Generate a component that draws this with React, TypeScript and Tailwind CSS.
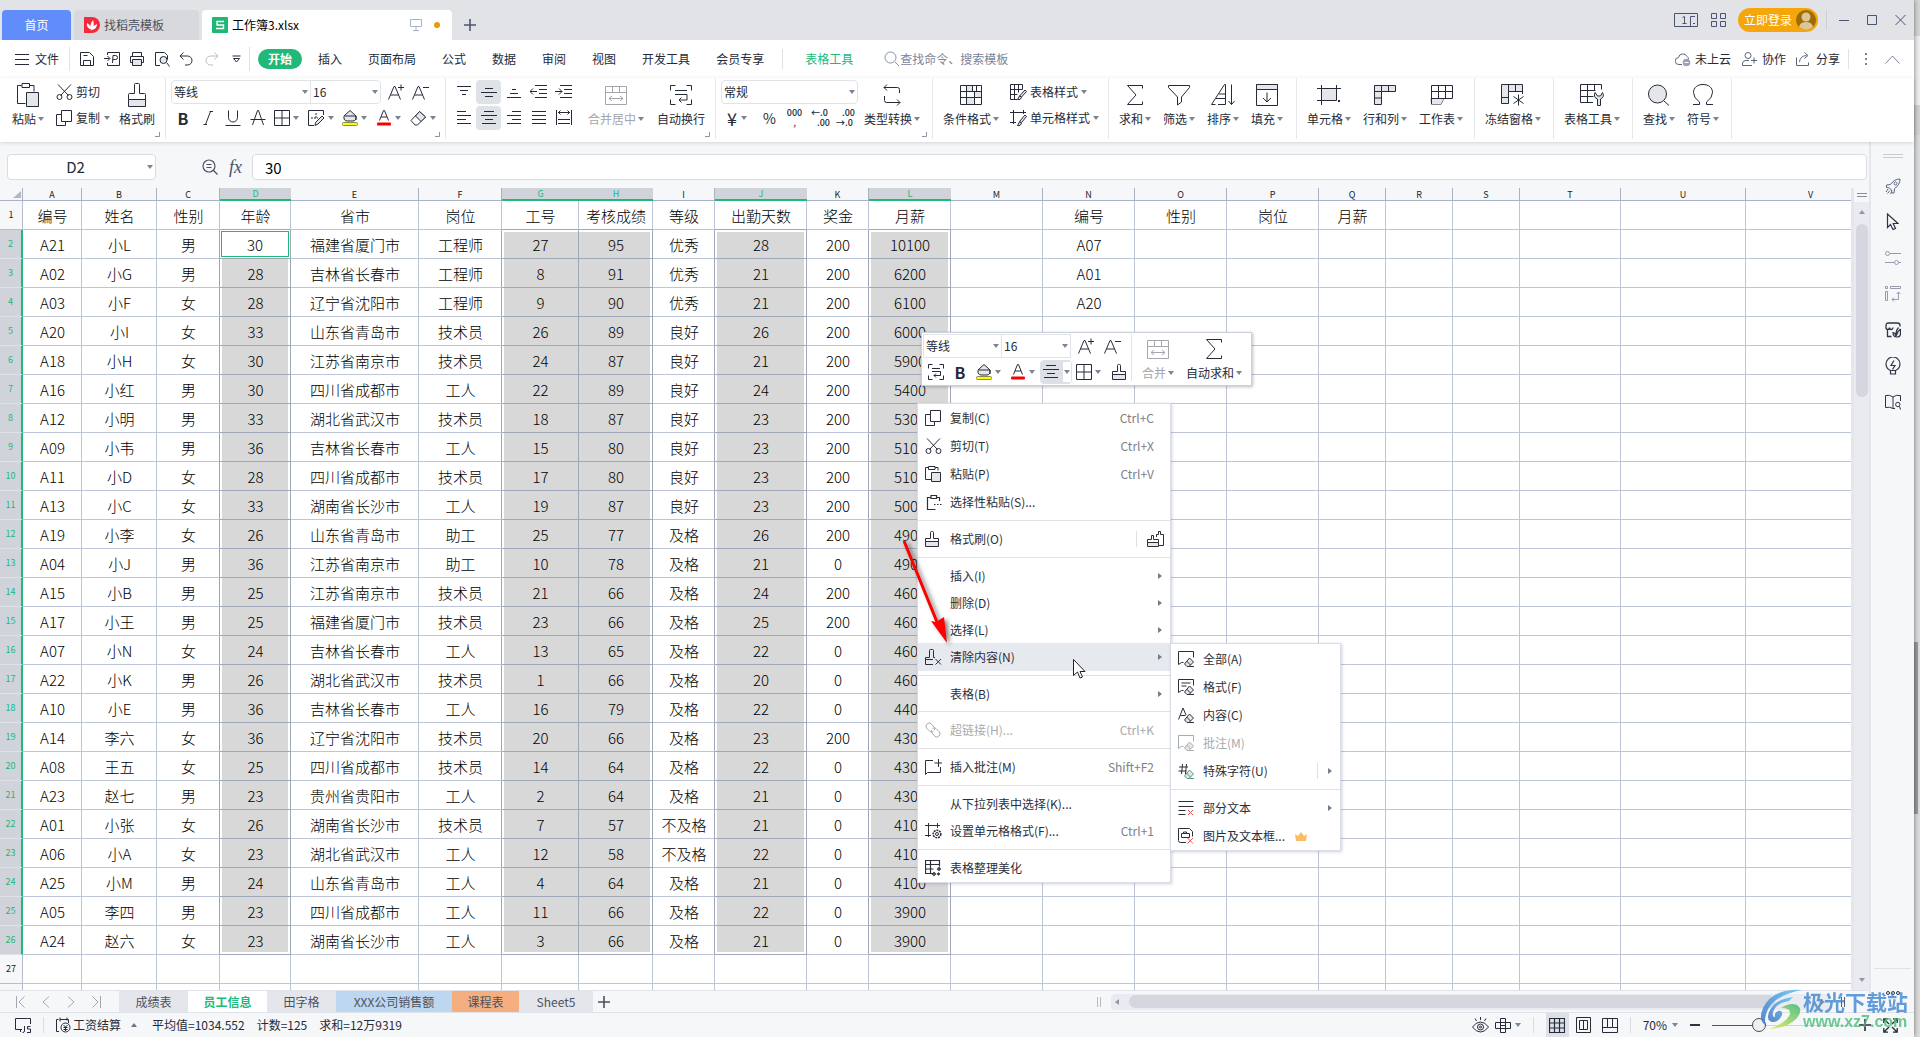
import React from 'react';
import type { ReactNode } from 'react';

const G = '#e4e6ea';

type IconDef = [number, number, ReactNode];

const eraser = (
  <path d="M11.5 7l4 4-4.5 4.5h-2l-2.5-2.5zM8.5 10l4 4M9 15.5h7" fill={G} />
);

const ICONS: Record<string, IconDef> = {
  menu: [14, 12, <path d="M0 1.5h14M0 6.5h14M0 11.5h14" />],
  save: [16, 16, <path d="M1.5 1.5h9l4 4v9h-13zM4.5 14.5v-5h7v5M4.5 4.5h4" />],
  pdf: [16, 16, <path d="M3.5 4V1.5h12v13h-12V12M0 7.500h5.500M3.500 5l2.500 2.500L3.500 10M8.500 12l.5-7.500h2.500q2 0 2 2t-2 2H9" />],
  print: [16, 16, <><path d="M3.500 5.500v-4h9v4M3.500 11.500h-2v-6h13v6h-2" /><path d="M3.500 8.500h9v6h-9z" fill={G} /></>],
  preview: [16, 16, <><path d="M6 14.500H1.500v-13h9l3 3v4M13 12l2.500 3.500" /><circle cx="9.500" cy="9" r="3.500" fill={G} /></>],
  undo: [14, 14, <path d="M4.500.5l-3.500 3.500 3.500 3.500M1 4h7.500a4.500 4.500 0 010 9H6" />],
  redo: [14, 14, <path d="M9.500.5l3.500 3.500-3.500 3.500M13 4H5.500a4.500 4.500 0 000 9H8" />],
  more: [9, 8, <path d="M.5 1h8M1.500 3.500h6L4.500 7z" />],
  search: [16, 16, <path d="M11 11l4 4M12 6.500a5.500 5.500 0 11-11 0 5.500 5.500 0 0111 0z" />],
  paste: [22, 24, <><path d="M8.500 20.500h-8v-18h4M13 2.500h4v6M5 .5h7.500v4H5z" /><path d="M9.500 9.500h12v14h-12z" fill={G} /></>],
  cut: [17, 16, <><path d="M2 .5l10.500 11M15 .5L4.500 11.500" /><circle cx="3.500" cy="13" r="2.500" /><circle cx="13.500" cy="13" r="2.500" /></>],
  copy: [16, 16, <path d="M5.500.5h10v11h-10zM5.500 4.500h-5v11h9v-4" />],
  brush: [18, 24, <><path d="M6.500 10.500V1.500q0-1 1-1h3q1 0 1 1v9h5q1 0 1 1v5H.5v-5q0-1 1-1z" /><path d="M.5 16.500h17v7H.5z" fill={G} /></>],
  brushSm: [14, 16, <><path d="M5.500 7.500v-6q0-1 1-1h1q1 0 1 1v6h5v3H.5v-3z" /><path d="M.5 10.500h13v5H.5z" fill={G} /></>],
  brush2: [17, 16, <><path d="M9.500 6V3.500h2v-3h2v3h3v11H12" /><path d="M4.500 8.500v-4h2v4h5v3H.5v-3z" fill="#fff" /><path d="M.5 11.500h11v4H.5z" fill={G} /></>],
  fontUp: [16, 16, <path d="M.5 15.500L6 2.500h1l5.500 13M2.500 11h8M10 3.500h6M13 .5v6" />],
  fontDown: [17, 16, <path d="M.5 15.500L6 2.500h1l5.500 13M2.500 11h8M11 3.500h6" />],
  italic: [10, 14, <path d="M4 13.500H.5M6.500.5H10M7.500.5l-5 13" />],
  underline: [16, 16, <path d="M3.500.5v7a4.500 4.500 0 009 0v-7M.5 15.500h15" />],
  strike: [16, 16, <path d="M2.500 15L7.500.5h1L13.500 15M.5 9.500h15" />],
  border: [16, 16, <path d="M.5.5h15v15H.5zM8 .5v15M.5 8h15" />],
  drawBorder: [17, 16, <><path d="M15.500 5V.5H.5v15H6" /><path d="M8 3v6M3 8h7" strokeDasharray="2 1" /><path d="M14 6l2 2-6 6-3 1.500.5-3z" fill={G} /></>],
  fill: [16, 16, <><path d="M8 .5l6 5.500v3q-1 2-3 2H5Q3 11 2 9V6z" fill={G} /><path d="M3 6h11v4" /><rect x=".5" y="12.500" width="15" height="3" rx="1" fill="#ffff00" stroke="#8a8a55" /></>],
  fontColor: [16, 16, <><path d="M3.500 10.500L7.500.5h1l4 10M5 7h6" /><rect x="1" y="12.500" width="14" height="3" rx="1" fill="#f00" stroke="none" /></>],
  eraser: [17, 16, <><path d="M9.500 1.500l6 5.500-8 8H5L1 10.500z" /><path d="M9.500 1.500l6 5.500-4.500 4.500L5.500 6z" fill={G} /></>],
  alTop: [14, 14, <path d="M0 1.500h14M3 5.500h8M5 9.500h4" />],
  alMid: [16, 14, <path d="M4 3.500h8M0 7.500h16M4 11.500h8" />],
  alBot: [14, 14, <path d="M5 4.500h4M3 8.500h8M0 12.500h14" />],
  indL: [17, 14, <path d="M5 .5h12M9 4.500h8M9 8.500h8M5 12.500h12M0 6.500h7M3 3.500L0 6.500l3 3" />],
  indR: [17, 14, <path d="M5 .5h12M9 4.500h8M9 8.500h8M5 12.500h12M0 6.500h7M4 3.500l3 3-3 3" />],
  left: [14, 14, <path d="M0 .5h9M0 4.500h14M0 8.500h9M0 12.500h14" />],
  center: [16, 14, <path d="M3 .5h10M0 4.500h16M4 8.500h8M1 12.500h14" />],
  right: [14, 14, <path d="M5 .5h9M0 4.500h14M5 8.500h9M0 12.500h14" />],
  justify: [14, 14, <path d="M0 .5h14M0 4.500h14M0 8.500h14M0 12.500h14" />],
  spread: [16, 16, <path d="M.5 0v15M15.500 0v15M2 2.500h12M4.500.5l-2 2 2 2M11.500.5l2 2-2 2M2 9.500h12M2 13.500h12" />],
  merge: [22, 19, <path d="M.5.5h21v18H.5zM.5 6.500h21M7.500.5v6M14.500.5v6M4 12.500h14M7 10l-3 2.500L7 15M15 10l3 2.500-3 2.500" />],
  wrap: [22, 20, <path d="M.5 5.500v-5h5M16.500.5h5v5M21.500 14.500v5h-5M5.500 19.500h-5v-5M5 5.500h12M5 9.500h12v5.500H9M11.500 12.500L9 15l2.500 2.500" />],
  wrapSm: [16, 16, <path d="M.5 4.500v-4h4M11.500.5h4v4M15.500 11.500v4h-4M4.500 15.500h-4v-4M4 4.500h8M4 7.500h8.500v4H6M8 9.500l-2 2 2 2" />],
  convert: [18, 22, <path d="M4 .5L1 3.500l3 3M1 3.500h13.500q2 0 2 2V9M14 15.500l3 3-3 3M17 18.500H3.500q-2 0-2-2V12" />],
  cond: [22, 20, <><path d="M.5.5h21v19H.5z" /><path d="M6.500.5h6v6h-6zM6.500 12.500h8v7h-8zM14.500 6.500h7v6h-7z" fill={G} /><path d="M.5 6.500h21M.5 12.500h21M6.500.5v19M12.500.5v6M16.500.5v6" /></>],
  tblStyle: [17, 16, <><path d="M7 15.500H.5V.5h12v5M.5 5.500h12M.5 10.500h7M4.500.5v15M8.500.5v8" /><path d="M15 6l1.500 1.500-5 5.500-2-1zM9.500 12l2 1.500-1.500 2H7.500z" fill={G} /></>],
  cellStyle: [17, 16, <><path d="M0 2.500h16M3.500 0v14M13.500 0v4M0 12.500h6" /><path d="M15 5l1.500 1.500-5 6-2-1zM9.500 12l2 1.500-1.500 2H7.500z" fill={G} /></>],
  sum: [18, 22, <path d="M16.500 4.500v-3H1.500L10 11 1.500 20.500h15v-3" />],
  filter: [22, 22, <path d="M.5 1.500h21v2L13.500 13v5l-4 3v-8L.5 3.500z" />],
  sort: [24, 22, <path d="M14.500 20.500V.5h-1L.5 20.500h4M5 14.500h9.500M8 10h6M20.500.5v20M17.500 17l3 3.500 3-3.500M7 20.500h7.500" />],
  fillDown: [22, 22, <><path d="M.5.5h21v21H.5z" /><path d="M.5.5h21v5H.5z" fill={G} /><path d="M11 8.500v9M7 14l4 4 4-4" /></>],
  cell: [24, 20, <><path d="M4.500 3.500h15v12h-15z" fill={G} /><path d="M0 3.500h24M4.500 0v20M19.500 0v14M0 15.500h18" /><rect x="21" y="15" width="2" height="2" fill="currentColor" stroke="none" /></>],
  rowcol: [22, 20, <><path d="M.5.5h21v6H7.500v13h-7z" fill={G} /><path d="M7.500.5v6M14.500.5v6M.5 6.500h7M.5 13h7" /></>],
  sheet: [23, 20, <><path d="M1 13.500h13l-3 6H1.500z" fill={G} stroke="#888" /><path d="M1.500.5h21v13h-21zM1.500 6.500h21M8.500.5v13M15.500.5v13M1.500 13v6" /></>],
  freeze: [24, 22, <><path d="M.5.5h21v7H7.500v12h-7z" fill={G} /><path d="M7.500.5v7M14.500.5v7M.5 13.500h7M21.500 7v3M17.500 10.500v11M12.500 12.500l10 7M22.500 12.500l-10 7" /></>],
  tools: [24, 22, <><path d="M13 18.500H.5V.5h21v5M.5 6.500h15M.5 12.500h13M7.500.5v18M14.500.5v6" /><path d="M15 8.500q-2 5 2.500 6.500v6.500h3V15q4.500-2 2-6.500l-2 3.500h-3z" fill={G} /></>],
  find: [22, 22, <><circle cx="9.500" cy="10" r="9" fill={G} /><path d="M16 17l5 4.500" /></>],
  symbol: [22, 22, <path d="M1 20.500h6.500v-2.500Q1.500 14 1.500 8.500C1.500 3.500 5.500.5 11 .5s9.500 3 9.500 8q0 5.500-6 9.500v2.500H21" />],
  tabs1: [24, 14, <path d="M.5.5h23v13H.5zM8.500 4.500l2-1v7M8.500 10.500h4M21 3.500h-4.500v10M19 10.500h2" />],
  apps: [15, 14, <path d="M.5.5h5v5h-5zM9.500.5h5v5h-5zM.5 8.500h5v5h-5zM9.500 8.500h5v5h-5z" />],
  min: [10, 10, <path d="M0 5.500h10" />],
  max: [10, 10, <path d="M.5.5h9v9h-9z" />],
  close: [11, 10, <path d="M.5 0l10 10M10.500 0L.5 10" />],
  plus: [12, 12, <path d="M6 0v12M0 6h12" strokeWidth="1.600" />],
  monitor: [12, 12, <path d="M.5.5h11v7H.5zM6 7.500v4M3 11.500h6" />],
  cloud: [16, 15, <><path d="M7 12.500H4a3.500 3.500 0 01-.5-7A4.500 4.500 0 0112 4.500q1.500 1 1.500 2.500" /><circle cx="11.500" cy="10.500" r="3.800" fill="#9aa2b5" stroke="none" /><path d="M9.500 10.500h4" stroke="#fff" /></>],
  collab: [15, 14, <path d="M9 3.500a3 3 0 11-6 0 3 3 0 016 0zM10 13.500H.5V11Q1 8.500 4 8.500h3M12 5.500v6M9 8.500h6" />],
  share: [15, 14, <path d="M.5 5.500v8h12v-3M3.500 10q.5-6 7-6.500M8.500.5l3.500 3L8.500 6.500" />],
  up: [15, 9, <path d="M.5 8.500L7.500 1l7 7.500" />],
  zoomFx: [17, 17, <path d="M11.500 11.500l4 4M13 7A6 6 0 111 7a6 6 0 0112 0zM4.500 5.500h5M4.500 8.500h5" strokeWidth="1.200" />],
  rocket: [16, 16, <path d="M15 1Q9 1 5.500 6.500L1.500 7v2.500l3 .5 2 2 .5 3H9l.5-4.500Q15 7 15 1zM3 11l-2 3M5 12.500l-2.500 3M6.500 14l-1 2M12 5.500a1.500 1.500 0 11-3 0 1.500 1.500 0 013 0z" />],
  pointer: [13, 18, <path d="M1.500 1v13.500l3-3 2.500 5 2.500-1-2.300-5H12z" strokeWidth="1.200" />],
  sliders: [16, 16, <path d="M5 3.500h11M0 12.500h9M14 12.500h2M4.500 3.500a2 2 0 11-4 0 2 2 0 014 0zM13.500 12.500a2 2 0 11-4 0 2 2 0 014 0z" />],
  transpose: [16, 16, <path d="M.5.5h2v2h-2zM5.500.5h10v2h-10zM.5 5.500h2v9h-2zM13.500 6v7.500H7M11.500 8l2-2 2 2M9 11.500l-2 2 2 2" />],
  store: [16, 16, <><path d="M2.500 8v6.500H6.500M1 5.500V3.500Q1 1 3.500 1h9Q15 1 15 3.500v1M1 5.500q0 2 1.700 2t1.800-2q0 2 1.700 2t1.800-2" strokeWidth="1.300" /><path d="M13.500 5.500q-3 3.500-2.500 7M15.500 7v4.500q0 3.500-3.500 3.500-4 0-4-4.500 2 0 3 3.500 1-4.500 4.500-7" fill={G} strokeWidth="1.200" /></>],
  idea: [16, 18, <path d="M5.500 13.500Q1 11.500 1 7a6.500 6.500 0 0114 0q0 4.500-4.500 6.500v3.500h-5zM9 3.500l-3 5h4l-2.500 4M6 13.500h4" strokeWidth="1.200" />],
  book: [16, 16, <path d="M8 14.500V3Q5 .5.5 1.500v12Q5 12.500 8 14.500zM8 3q3-2.500 7.500-1.500V7M8 14.500h2M15 10.500a2.200 2.200 0 11-4.400 0 2.200 2.200 0 014.400 0zM14.500 12.500l1 3" />],
  dots3: [16, 6, <path d="M4.500 3a1.500 1.500 0 11-3 0 1.500 1.500 0 013 0zM9.500 3a1.500 1.500 0 11-3 0 1.500 1.500 0 013 0zM14.500 3a1.500 1.500 0 11-3 0 1.500 1.500 0 013 0z" />],
  first: [9, 12, <path d="M.5 0v12M8.500.5L3 6l5.500 5.500" />],
  prev: [8, 12, <path d="M7 .5L1 6l6 5.500" />],
  next: [8, 12, <path d="M1 .5L7 6l-6 5.500" />],
  last: [9, 12, <path d="M8.500 0v12M.5.5L6 6 .5 11.500" />],
  jsMacro: [17, 16, <path d="M7 12.500H.5V1.500h12M12.500 1.500h3V7M5.500 12.500v2.500M9.500 9v5q0 1.500-2 1.500M15.500 9.500h-3v2.500h3v3.500h-3.500" />],
  payroll: [16, 16, <><path d="M4 14.500H1.500V2.500h2M5 .5v4M5 2.500h8.500V6M12 .5v3" /><circle cx="10.500" cy="10.500" r="4.500" /><path d="M8.500 8l2 2 2-2M8.500 10.500h4M8.500 12.500h4M10.500 10v4" /></>],
  eye: [17, 16, <path d="M.5 10q3.500-5 8-5t8 5q-3.500 5-8 5t-8-5zM11.500 10a3 3 0 11-6 0 3 3 0 016 0zM8.500 0v3M3 1.500L4.500 4M14 1.500L12.500 4M9.500 10a1 1 0 11-2 0 1 1 0 012 0z" />],
  cross: [16, 15, <path d="M5.500.5h5v14h-5zM.5 4.500h15v6H.5zM5.500 7.500h5" />],
  gridView: [16, 15, <path d="M.5.5h15v14H.5zM5.500.5v14M10.500.5v14M.5 5h15M.5 10h15" strokeWidth="1.200" />],
  pageView: [15, 16, <path d="M.5.5h14v15H.5zM3.500 3.500h8v9h-8zM7.500 3.500v9" />],
  breakView: [16, 15, <path d="M.5.5h15v14H.5zM5.500.5v9M10.500.5v9h-10M15.500 9.500h-5" />],
  full: [15, 15, <path d="M9 6l5-5M10 .8h4.200V5M6 6L1 1M.8 5V.8H5M9 9l5 5M14.200 10v4.200H10M6 9l-5 5M5 14.200H.8V10" strokeWidth="1.300" />],
  pasteSm: [16, 16, <><path d="M6 13.500H.5v-12h3M10 1.500h3v3M3.500.5H10v3H3.500z" /><path d="M6.500 6.500h9v9h-9z" fill={G} /></>],
  pasteSp: [17, 15, <path d="M14.500 6V2.500h-3M6 2.500H2.500v12h8M6 .5h5.500v3H6zM9 9.500h1.500M12 9.500h1.500M15 9.500h1.500" strokeWidth="1.200" />],
  clear: [17, 16, <path d="M8 15.500H.5v-7h4v-7q0-1 1-1h2q1 0 1 1v7H10M.5 10.500H8M10.500 10l5.500 5.500M16 10l-5.500 5.500" />],
  link: [16, 16, <path d="M8.500 9.500Q7 11 5 9.500L1.500 6Q0 4 2 2 4 0 6 1.500L9 5q1 1.500.5 3M7.500 6.500Q9 5 11 6.500l3.500 3.500q1.500 2-.5 4t-4 .5L7 11q-1-1.500-.5-3" />],
  comment: [17, 16, <path d="M8 1.500H.5v14l2-2h13V8M13.500 0v8M9.500 4h7.500" />],
  cellFmt: [17, 16, <><path d="M0 2.500h15M3.500 0v14M12.500 0v5M0 12.500h6" /><circle cx="12" cy="11" r="3.800" strokeWidth="1.600" strokeDasharray="2 .8" /><circle cx="12" cy="11" r="1.500" /></>],
  beautify: [16, 16, <path d="M8 13.500H.5V.5h14v6M.5 4.500h14M.5 9h8M5.500.5v13M14 7.500l1.500 1.500-1.500 1.500-1.500-1.500zM9 12.500l1.500 1.500L9 15.500 7.500 14zM13.500 13l1 1-1 1-1-1z" strokeWidth="1.200" />],
  clrAll: [17, 16, <><path d="M5.500 11.500H3.500l-3 2V.5h15v6" />{eraser}</>],
  clrFmt: [17, 16, <><path d="M5.500 11.500H3.500l-3 2V.5h15v6M3.500 4h9M3.500 7h5" />{eraser}</>],
  clrTxt: [17, 16, <><path d="M.5 12.500L5 1l3 7M2.500 8.500h5" />{eraser}</>],
  clrSym: [17, 16, <><path d="M4.500 1l-1 10M8.500 1l-1 10M1 4h9M.5 8h8" /><g stroke="#4f9d73">{eraser}</g></>],
  partTxt: [16, 16, <><path d="M.5 1.500h15M.5 6.500h15M.5 10.500h7M.5 14.500h7" /><path d="M10 10l5 5M15 10l-5 5" stroke="#e05252" /></>],
  pic: [16, 16, <><path d="M8 14.500H2.500q-2 0-2-2v-12h11l3 3v5M3.500 5.500h8v4h-8zM5.500 5.500V4h3v1.500" /><path d="M9.500 10l5.500 5.500M15 10l-5.500 5.500" stroke="#e05252" /></>],
};

function Icon({ name, className = '' }: { name: string; className?: string }) {
  const [w, h, body] = ICONS[name];
  return (
    <svg width={w} height={h} viewBox={`0 0 ${w} ${h}`} fill="none" stroke="currentColor" className={`shrink-0 ${className}`} aria-hidden="true">
      {body}
    </svg>
  );
}

function Caret({ className = 'text-[#7b8494]' }: { className?: string }) {
  return (
    <svg width="6" height="4" viewBox="0 0 6 4" className={`shrink-0 ${className}`} aria-hidden="true">
      <path d="M0 0h6L3 4z" fill="currentColor" />
    </svg>
  );
}

function Group({ children, corner }: { children: ReactNode; corner?: boolean }) {
  return (
    <div className="relative flex h-[61px] shrink-0 border-r border-[#e6e8ec] pt-0.5">
      {children}
      {corner && (
        <svg width="5" height="5" viewBox="0 0 5 5" fill="none" stroke="#8c94a3" className="absolute right-[5px] bottom-0.5" aria-hidden="true">
          <path d="M0 4.500h4.500V0" />
        </svg>
      )}
    </div>
  );
}

function Big({ icon, label, caret, muted, className = '' }: { icon: string; label: string; caret?: boolean; muted?: boolean; className?: string }) {
  return (
    <button className={`flex h-12 shrink-0 flex-col items-center whitespace-nowrap ${muted ? 'text-[#a3a6ac]' : ''} ${className}`}>
      <span className="flex h-[30px] items-center"><Icon name={icon} /></span>
      <span className="flex h-[18px] items-center gap-0.5">{label}{caret && <Caret />}</span>
    </button>
  );
}

function Tool({ icon, label, caret, active, className = '' }: { icon: string; label: string; caret?: boolean; active?: boolean; className?: string }) {
  return (
    <button
      aria-label={label}
      className={`flex h-6 shrink-0 items-center gap-[3px] ${caret ? 'w-[34px] pl-1' : 'w-[25px] justify-center'} ${active ? 'rounded-sm bg-[#dfe3e8]' : ''} ${className}`}
    >
      <Icon name={icon} />
      {caret && <Caret />}
    </button>
  );
}

function Dropdown({ label, value, className = '' }: { label: string; value: string; className?: string }) {
  return (
    <div className={`flex h-6 items-center border border-[#e0e3e8] bg-white pr-0.5 ${className}`}>
      <select aria-label={label} defaultValue={value} className="min-w-0 flex-1 appearance-none bg-transparent pl-0.5 outline-none">
        <option>{value}</option>
      </select>
      <Caret />
    </div>
  );
}

const MENU_TABS = ['插入', '页面布局', '公式', '数据', '审阅', '视图', '开发工具', '会员专享'];

const COLUMNS = [
  { id: 'A', w: 59 }, { id: 'B', w: 75 }, { id: 'C', w: 63 }, { id: 'D', w: 71, sel: 'both' },
  { id: 'E', w: 128 }, { id: 'F', w: 83 }, { id: 'G', w: 77, sel: 'left' }, { id: 'H', w: 74, sel: 'right' },
  { id: 'I', w: 62 }, { id: 'J', w: 92, sel: 'both' }, { id: 'K', w: 62 }, { id: 'L', w: 82, sel: 'both' },
  { id: 'M', w: 92 }, { id: 'N', w: 92 }, { id: 'O', w: 92 }, { id: 'P', w: 92 }, { id: 'Q', w: 67 },
  { id: 'R', w: 67 }, { id: 'S', w: 67 }, { id: 'T', w: 101 }, { id: 'U', w: 125 }, { id: 'V', w: 130 },
];

const ROWS = [
  '编号,姓名,性别,年龄,省市,岗位,工号,考核成绩,等级,出勤天数,奖金,月薪,,编号,性别,岗位,月薪',
  'A21,小L,男,30,福建省厦门市,工程师,27,95,优秀,28,200,10100,,A07',
  'A02,小G,男,28,吉林省长春市,工程师,8,91,优秀,21,200,6200,,A01',
  'A03,小F,女,28,辽宁省沈阳市,工程师,9,90,优秀,21,200,6100,,A20',
  'A20,小I,女,33,山东省青岛市,技术员,26,89,良好,26,200,6000',
  'A18,小H,女,30,江苏省南京市,技术员,24,87,良好,21,200,5900',
  'A16,小红,男,30,四川省成都市,工人,22,89,良好,24,200,5400',
  'A12,小明,男,33,湖北省武汉市,技术员,18,87,良好,23,200,5300',
  'A09,小韦,男,36,吉林省长春市,工人,15,80,良好,23,200,5100',
  'A11,小D,女,28,四川省成都市,技术员,17,80,良好,23,200,5100',
  'A13,小C,女,33,湖南省长沙市,工人,19,87,良好,23,200,5000',
  'A19,小李,女,26,山东省青岛市,助工,25,77,及格,26,200,4900',
  'A04,小J,男,36,江苏省南京市,助工,10,78,及格,21,0,4900',
  'A15,小B,男,25,江苏省南京市,技术员,21,66,及格,24,200,4600',
  'A17,小王,男,25,福建省厦门市,技术员,23,66,及格,25,200,4600',
  'A07,小N,女,24,吉林省长春市,工人,13,65,及格,22,0,4600',
  'A22,小K,男,26,湖北省武汉市,技术员,1,66,及格,20,0,4600',
  'A10,小E,男,36,吉林省长春市,工人,16,79,及格,22,0,4400',
  'A14,李六,女,36,辽宁省沈阳市,技术员,20,66,及格,23,200,4300',
  'A08,王五,女,25,四川省成都市,技术员,14,64,及格,22,0,4300',
  'A23,赵七,男,23,贵州省贵阳市,工人,2,64,及格,21,0,4300',
  'A01,小张,女,26,湖南省长沙市,技术员,7,57,不及格,21,0,4100',
  'A06,小A,女,23,湖北省武汉市,工人,12,58,不及格,22,0,4100',
  'A25,小M,男,24,山东省青岛市,工人,4,64,及格,21,0,4100',
  'A05,李四,男,23,四川省成都市,工人,11,66,及格,22,0,3900',
  'A24,赵六,女,23,湖南省长沙市,工人,3,66,及格,21,0,3900',
  '',
  '',
].map((line) => line.split(','));

const INSET: Record<string, string> = {
  both: 'shadow-[inset_2px_0_#fff,inset_-2px_0_#fff]',
  left: 'shadow-[inset_2px_0_#fff]',
  right: 'shadow-[inset_-2px_0_#fff]',
  bothTop: 'shadow-[inset_2px_0_#fff,inset_-2px_0_#fff,inset_0_2px_#fff]',
  leftTop: 'shadow-[inset_2px_0_#fff,inset_0_2px_#fff]',
  rightTop: 'shadow-[inset_-2px_0_#fff,inset_0_2px_#fff]',
  bothEnd: 'shadow-[inset_2px_0_#fff,inset_-2px_0_#fff,inset_0_-2px_#fff]',
  leftEnd: 'shadow-[inset_2px_0_#fff,inset_0_-2px_#fff]',
  rightEnd: 'shadow-[inset_-2px_0_#fff,inset_0_-2px_#fff]',
};

function Sheet() {
  return (
    <table className="w-0 min-w-full table-fixed border-separate border-spacing-0 text-center text-[15px] font-light text-black">
      <colgroup>
        <col className="w-[23px]" />
        {COLUMNS.map((c) => <col key={c.id} style={{ width: c.w }} />)}
      </colgroup>
      <thead>
        <tr className="text-[9px] leading-[11px]">
          <th className="h-[13px] border-r border-b border-[#a9b1c4] bg-[#f5f7f9] p-0">
            <svg width="8" height="7" viewBox="0 0 8 7" className="mr-px ml-auto" aria-hidden="true"><path d="M8 0v7H0z" fill="#b4b8be" /></svg>
          </th>
          {COLUMNS.map((c) => (
            <th
              key={c.id}
              scope="col"
              className={`h-[13px] p-0 font-normal ${c.sel ? 'border-b-2 border-b-[#20b97a] bg-[#d0d3da] text-[#20b97a]' : 'border-r border-b border-[#a9b1c4] bg-[#f5f7f9] text-[#222]'}`}
            >
              {c.id}
            </th>
          ))}
        </tr>
      </thead>
      <tbody>
        {ROWS.map((row, r) => {
          const picked = r > 0 && r < 26;
          return (
            <tr key={r}>
              <th
                scope="row"
                className={`h-[29px] border-b p-0 text-[9px] font-normal ${picked ? 'border-r-2 border-r-[#20b97a] border-b-[#dfe2e8] bg-[#d0d3da] text-[#20b97a]' : 'border-r border-[#b7bdcc] bg-[#f5f7f9] text-[#222]'}`}
              >
                {r < 27 ? r + 1 : ''}
              </th>
              {COLUMNS.map((c, i) => {
                const sel = picked && c.sel;
                const nextSel = picked && COLUMNS[i + 1]?.sel;
                const active = r === 1 && c.id === 'D';
                const edge = r === 1 ? 'Top' : r === 25 ? 'End' : '';
                return (
                  <td
                    key={c.id}
                    className={`h-[29px] border-r border-b leading-5 whitespace-nowrap ${active ? 'p-0' : 'p-0 pt-0.5 pl-px'} ${sel || nextSel ? 'border-r-[#a0a7b8]' : 'border-r-[#bfc5d8]'} ${(sel || (r === 0 && c.sel)) ? 'border-b-[#a0a7b8]' : 'border-b-[#bfc5d8]'} ${sel && !active ? `bg-[#d8d8d8] ${INSET[c.sel + edge]}` : 'bg-white'}`}
                  >
                    {active ? (
                      <div className="mx-px flex h-[26px] items-center justify-center border border-[#20b97a] pt-0.5">{row[i]}</div>
                    ) : row[i]}
                  </td>
                );
              })}
            </tr>
          );
        })}
      </tbody>
    </table>
  );
}

interface Item {
  icon?: string;
  label: string;
  keys?: string;
  arrow?: boolean;
  muted?: boolean;
  active?: boolean;
  crown?: boolean;
  extra?: string;
  split?: boolean;
}

const CONTEXT: (Item | null)[] = [
  { icon: 'copy', label: '复制(C)', keys: 'Ctrl+C' },
  { icon: 'cut', label: '剪切(T)', keys: 'Ctrl+X' },
  { icon: 'pasteSm', label: '粘贴(P)', keys: 'Ctrl+V' },
  { icon: 'pasteSp', label: '选择性粘贴(S)...' },
  null,
  { icon: 'brushSm', label: '格式刷(O)', extra: 'brush2', split: true },
  null,
  { label: '插入(I)', arrow: true },
  { label: '删除(D)', arrow: true },
  { label: '选择(L)', arrow: true },
  { icon: 'clear', label: '清除内容(N)', arrow: true, active: true },
  null,
  { label: '表格(B)', arrow: true },
  null,
  { icon: 'link', label: '超链接(H)...', keys: 'Ctrl+K', muted: true },
  null,
  { icon: 'comment', label: '插入批注(M)', keys: 'Shift+F2' },
  null,
  { label: '从下拉列表中选择(K)...' },
  { icon: 'cellFmt', label: '设置单元格格式(F)...', keys: 'Ctrl+1' },
  null,
  { icon: 'beautify', label: '表格整理美化' },
];

const CLEAR: (Item | null)[] = [
  { icon: 'clrAll', label: '全部(A)' },
  { icon: 'clrFmt', label: '格式(F)' },
  { icon: 'clrTxt', label: '内容(C)' },
  { icon: 'clrAll', label: '批注(M)', muted: true },
  { icon: 'clrSym', label: '特殊字符(U)', arrow: true, split: true },
  null,
  { icon: 'partTxt', label: '部分文本', arrow: true },
  { icon: 'pic', label: '图片及文本框...', crown: true },
];

function Menu({ items, className }: { items: (Item | null)[]; className: string }) {
  return (
    <div role="menu" className={`absolute border border-[#d9dde6] bg-white text-xs text-[#2a2f3a] shadow-[1px_1px_3px_rgba(90,100,140,0.3)] ${className}`}>
      {items.map((it, i) =>
        it ? (
          <button
            key={i}
            role="menuitem"
            className={`flex w-full items-center pl-[7px] whitespace-nowrap ${it.icon ? 'h-7' : 'h-[27px]'} ${it.arrow ? 'pr-2' : 'pr-4'} ${it.muted ? 'text-[#a8abb0]' : ''} ${it.active ? 'bg-[#e6e9ee]' : ''}`}
          >
            <span className="flex w-[25px] items-center">{it.icon && <Icon name={it.icon} />}</span>
            {it.label}
            {it.crown && (
              <svg width="12" height="9" viewBox="0 0 12 9" className="ml-2.5" aria-hidden="true"><path d="M0 2l3 2 3-4 3 4 3-2-1 7H1z" fill="#fdbc64" /></svg>
            )}
            <span className="flex-1" />
            {it.split && <span className="mr-2.5 h-4 w-px bg-[#dde0e6]" />}
            {it.keys && <span className={it.muted ? 'text-[#a8abb0]' : 'text-[#7d8087]'}>{it.keys}</span>}
            {it.extra && <Icon name={it.extra} className="-mr-2.5" />}
            {it.arrow && (
              <svg width="4" height="6" viewBox="0 0 4 6" aria-hidden="true"><path d="M0 0v6l4-3z" fill="#757d8c" /></svg>
            )}
          </button>
        ) : (
          <div key={i} className="my-1 h-px bg-[#dfe1e6]" />
        ),
      )}
    </div>
  );
}

function MiniToolbar() {
  return (
    <div className="absolute top-[332px] left-[921px] z-20 flex h-[54px] border border-[#ccd0d8] bg-white p-px text-xs text-[#252b38] shadow-[1px_1px_3px_rgba(0,0,0,0.25)]">
      <div>
        <div className="flex">
          <Dropdown label="浮动字体" value="等线" className="w-[79px]" />
          <Dropdown label="浮动字号" value="16" className="-ml-px w-[70px]" />
          <Tool icon="fontUp" label="增大" className="ml-0.5" />
          <Tool icon="fontDown" label="减小" className="ml-0.5" />
        </div>
        <div className="mt-0.5 flex">
          <Tool icon="wrapSm" label="换行" />
          <button className="h-6 w-6 text-base font-bold">B</button>
          <Tool icon="fill" label="填充颜色" caret />
          <Tool icon="fontColor" label="字体颜色" caret />
          <button aria-label="对齐" className="flex h-6 w-8 items-center justify-between rounded-sm border border-[#dde1e7] bg-[#dde1e7] pl-0.5">
            <Icon name="center" />
            <span className="flex h-5 w-2 items-center bg-white pl-px"><Caret /></span>
          </button>
          <Tool icon="border" label="边框" caret />
          <Tool icon="brushSm" label="格式刷" />
        </div>
      </div>
      <div className="h-[47px] w-px bg-[#e0e3e8]" />
      <Big icon="merge" label="合并" caret muted className="ml-2.5" />
      <Big icon="sum" label="自动求和" caret className="mr-2 ml-3" />
    </div>
  );
}

function TitleBar() {
  return (
    <header className="flex h-10 items-end bg-[#e1e3e7] pl-0.5 text-xs text-[#4c5160]">
      <button className="h-[30px] w-[69px] rounded-t bg-[#608dfa] text-white">首页</button>
      <button className="ml-[3px] flex h-[30px] w-[125px] items-center gap-1 rounded-t bg-[#d8d9dc] pl-2.5">
        <svg width="16" height="16" viewBox="0 0 16 16" aria-hidden="true">
          <path d="M0 0h8a8 8 0 010 16H0z" fill="#f5293d" />
          <path d="M7 14Q5 8 9 3q2 5-1 9M6 12Q2 10 3 6q4 2 4 6M8 13q0-4 5-6 0 5-5 6" fill="#fff" />
        </svg>
        找稻壳模板
      </button>
      <button className="ml-[3px] flex h-[30px] w-[250px] items-center rounded-t bg-white pr-3 pl-2.5 text-black">
        <svg width="16" height="16" viewBox="0 0 16 16" fill="none" className="mr-1" aria-hidden="true">
          <rect width="16" height="16" rx="1" fill="#1cb874" />
          <path d="M12 4.500H5v3.500h6.500v3.500H4" stroke="#fff" strokeWidth="1.400" />
        </svg>
        工作簿3.xlsx
        <Icon name="monitor" className="mr-3 ml-auto text-[#aab2c8]" />
        <span className="size-1.5 rounded-full bg-[#ea9a08]" />
      </button>
      <button aria-label="新建" className="mb-[9px] ml-3 text-[#4a5574]"><Icon name="plus" /></button>
      <div className="mb-2 ml-auto flex h-6 items-center pr-2 text-[#4a5574]">
        <Icon name="tabs1" />
        <Icon name="apps" className="ml-[13px]" />
        <button className="ml-3 flex h-6 w-20 items-center gap-1 rounded-full bg-[#f5a60a] pl-1.5 text-white">
          立即登录
          <svg width="20" height="20" viewBox="0 0 20 20" aria-hidden="true">
            <circle cx="10" cy="10" r="10" fill="#9c6c05" />
            <circle cx="10" cy="7" r="4.500" fill="#dec594" />
            <path d="M3 17q1-5 7-5t7 5q-7 6-14 0z" fill="#dec594" />
          </svg>
        </button>
        <span className="ml-2 h-5 w-px bg-[#cbced6]" />
        <button aria-label="最小化" className="ml-3"><Icon name="min" /></button>
        <button aria-label="最大化" className="ml-[18px]"><Icon name="max" /></button>
        <button aria-label="关闭" className="ml-[18px]"><Icon name="close" /></button>
      </div>
    </header>
  );
}

function MenuBar() {
  return (
    <nav className="flex h-[38px] items-center bg-white pl-[15px] text-xs text-[#252b38]">
      <button className="flex items-center gap-1.5"><Icon name="menu" />文件</button>
      <span className="mr-[9px] ml-2.5 h-6 w-px bg-[#e0e2e6]" />
      <div className="flex items-center gap-[9px]">
        <Icon name="save" />
        <Icon name="pdf" />
        <Icon name="print" />
        <Icon name="preview" />
        <Icon name="undo" />
        <Icon name="redo" className="ml-[3px] text-[#b9bcc2]" />
        <Icon name="more" className="ml-1" />
      </div>
      <span className="mx-2 h-6 w-px bg-[#e0e2e6]" />
      <button className="mr-[3px] h-5 w-11 rounded-full bg-[#20b97a] font-bold text-white">开始</button>
      {MENU_TABS.map((t) => <button key={t} className="px-[13px]">{t}</button>)}
      <span className="ml-[5px] h-5 w-px bg-[#e0e2e6]" />
      <button className="ml-[22px] text-[#20b97a]">表格工具</button>
      <label className="ml-[31px] flex items-center text-[#8790a6]">
        <Icon name="search" />
        <input aria-label="搜索" placeholder="查找命令、搜索模板" className="w-40 outline-none placeholder:text-[#7b849b]" />
      </label>
      <div className="ml-auto flex items-center pr-[14px]">
        <button className="flex items-center gap-1"><Icon name="cloud" className="text-[#5b6479]" />未上云</button>
        <button className="ml-[11px] flex items-center gap-[5px]"><Icon name="collab" className="text-[#5b6479]" />协作</button>
        <button className="ml-2.5 flex items-center gap-[5px]"><Icon name="share" className="text-[#5b6479]" />分享</button>
        <span className="ml-2 h-5 w-px bg-[#e0e2e6]" />
        <span className="ml-4 flex flex-col gap-[3px]">
          <i className="size-0.5 bg-[#7b8494]" /><i className="size-0.5 bg-[#7b8494]" /><i className="size-0.5 bg-[#7b8494]" />
        </span>
        <button aria-label="收起" className="ml-[18px] text-[#7b8494]"><Icon name="up" /></button>
      </div>
    </nav>
  );
}

function Digits({ children }: { children: ReactNode }) {
  return <button className="flex h-6 w-[25px] flex-col items-center justify-center text-[9px] leading-[10px] font-medium whitespace-nowrap">{children}</button>;
}

function Ribbon() {
  return (
    <div className="relative z-10 flex h-16 bg-white text-xs text-[#252b38] shadow-[0_1px_4px_rgba(0,0,0,0.14)]">
      <Group corner>
        <Big icon="paste" label="粘贴" caret className="ml-3 w-8" />
        <div className="ml-3 flex w-[53px] flex-col gap-0.5 whitespace-nowrap">
          <button className="flex h-6 items-center gap-[3px]"><Icon name="cut" />剪切</button>
          <button className="flex h-6 items-center gap-1"><Icon name="copy" />复制<Caret /></button>
        </div>
        <Big icon="brush" label="格式刷" className="mr-2.5 ml-2.5 w-9" />
      </Group>
      <Group corner>
        <div className="flex w-[279px] flex-col gap-0.5 pl-[5px]">
          <div className="flex">
            <Dropdown label="字体" value="等线" className="w-[140px] rounded-l-sm" />
            <Dropdown label="字号" value="16" className="-ml-px w-[71px] rounded-r-sm" />
            <Tool icon="fontUp" label="增大字号" className="ml-0.5" />
            <Tool icon="fontDown" label="减小字号" />
          </div>
          <div className="flex">
            <button className="h-6 w-6 text-base font-bold">B</button>
            <Tool icon="italic" label="倾斜" />
            <Tool icon="underline" label="下划线" />
            <Tool icon="strike" label="删除线" />
            <Tool icon="border" label="边框" caret />
            <Tool icon="drawBorder" label="绘图边框" caret />
            <Tool icon="fill" label="填充颜色" caret />
            <Tool icon="fontColor" label="字体颜色" caret />
            <Tool icon="eraser" label="清除" caret />
          </div>
        </div>
      </Group>
      <Group corner>
        <div className="flex flex-col gap-0.5 pl-[5px]">
          <div className="flex">
            <Tool icon="alTop" label="顶端对齐" />
            <Tool icon="alMid" label="垂直居中" active />
            <Tool icon="alBot" label="底端对齐" />
            <Tool icon="indL" label="减少缩进" />
            <Tool icon="indR" label="增加缩进" />
          </div>
          <div className="flex">
            <Tool icon="left" label="左对齐" />
            <Tool icon="center" label="水平居中" active />
            <Tool icon="right" label="右对齐" />
            <Tool icon="justify" label="两端对齐" />
            <Tool icon="spread" label="分散对齐" />
          </div>
        </div>
        <Big icon="merge" label="合并居中" caret muted className="ml-3 w-14" />
        <Big icon="wrap" label="自动换行" className="mr-2.5 ml-[13px] w-12" />
      </Group>
      <Group corner>
        <div className="flex flex-col gap-0.5 pl-[5px]">
          <Dropdown label="数字格式" value="常规" className="w-[137px] rounded-sm" />
          <div className="flex pl-1.5">
            <button className="flex h-6 w-[30px] items-center gap-1 text-lg leading-6">¥<Caret /></button>
            <button className="h-6 w-[25px] text-sm">%</button>
            <Digits><span>000</span><span>,</span></Digits>
            <Digits><span>←.0</span><span className="self-end pr-0.5">.00</span></Digits>
            <Digits><span className="self-end pr-0.5">.00</span><span>→.0</span></Digits>
          </div>
        </div>
        <Big icon="convert" label="类型转换" caret className="mr-3 ml-1.5 w-14" />
      </Group>
      <Group>
        <Big icon="cond" label="条件格式" caret className="ml-2.5 w-14" />
        <div className="mr-[9px] ml-[11px] flex flex-col gap-0.5">
          <button className="flex h-6 items-center gap-[3px]"><Icon name="tblStyle" />表格样式<Caret /></button>
          <button className="flex h-6 items-center gap-[3px]"><Icon name="cellStyle" />单元格样式<Caret /></button>
        </div>
      </Group>
      <Group>
        <div className="flex gap-3 pr-[13px] pl-2.5">
          <Big icon="sum" label="求和" caret className="w-8" />
          <Big icon="filter" label="筛选" caret className="w-8" />
          <Big icon="sort" label="排序" caret className="w-8" />
          <Big icon="fillDown" label="填充" caret className="w-8" />
        </div>
      </Group>
      <Group>
        <div className="flex gap-3 pr-[11px] pl-2.5">
          <Big icon="cell" label="单元格" caret className="w-11" />
          <Big icon="rowcol" label="行和列" caret className="w-11" />
          <Big icon="sheet" label="工作表" caret className="w-11" />
        </div>
      </Group>
      <Group><Big icon="freeze" label="冻结窗格" caret className="mr-3 ml-2.5 w-14" /></Group>
      <Group><Big icon="tools" label="表格工具" caret className="mr-3 ml-2.5 w-14" /></Group>
      <Group>
        <div className="flex gap-3 pr-3 pl-2.5">
          <Big icon="find" label="查找" caret className="w-8" />
          <Big icon="symbol" label="符号" caret className="w-8" />
        </div>
      </Group>
    </div>
  );
}

function FormulaBar() {
  return (
    <div className="flex h-[46px] items-center bg-[#f5f7f9] pt-1 pr-0.5 pl-[7px] text-[15px] text-[#252b38]">
      <div className="flex h-[26px] w-[149px] items-center rounded-sm border border-[#d9dce3] bg-white pr-0.5">
        <input aria-label="名称框" defaultValue="D2" className="w-full min-w-0 pr-1 text-center outline-none" />
        <Caret />
      </div>
      <Icon name="zoomFx" className="ml-[46px] text-[#4a5166]" />
      <span className="ml-2.5 w-[23px] font-['Liberation_Serif',serif] text-lg text-[#4a5166] italic">fx</span>
      <input aria-label="编辑栏" defaultValue="30" className="h-[26px] flex-1 rounded-sm border border-[#d9dce3] bg-white px-3 text-black outline-none" />
    </div>
  );
}

function SheetTabs() {
  const tab = 'flex h-[21px] shrink-0 items-center justify-center';
  return (
    <div className="flex h-[22px] bg-[#f5f7f9] text-xs text-[#4c5160]">
      <div className="flex min-w-0 flex-1 border-t border-[#dfe2e8]">
        <div className="flex w-[119px] shrink-0 items-center gap-[17px] pl-4 text-[#a3a8b2]">
          <Icon name="first" /><Icon name="prev" /><Icon name="next" /><Icon name="last" />
        </div>
        <button className={`${tab} w-[69px] bg-[#e5e6ec]`}>成绩表</button>
        <button className={`${tab} w-[79px] bg-white font-bold text-[#20b97a]`}>员工信息</button>
        <button className={`${tab} w-[69px] bg-[#e5e6ec]`}>田字格</button>
        <button className={`${tab} w-[116px] bg-[#bcd7ef]`}>XXX公司销售额</button>
        <button className={`${tab} w-[67px] bg-[#f5ae80]`}>课程表</button>
        <button className={`${tab} w-[74px] bg-[#e5e6ec]`}>Sheet5</button>
        <button aria-label="新建工作表" className="ml-[5px]"><Icon name="plus" /></button>
      </div>
      <div className="flex w-[772px] shrink-0 items-center border-t border-[#dfe2e8] text-[#9aa1ae]">
        <span className="h-2.5 w-1 border-x border-[#b4b9c4]" />
        <div className="ml-2.5 flex h-4 flex-1 items-center rounded-sm bg-[#e9ebf0] pr-1 pl-1">
          <svg width="4" height="6" viewBox="0 0 4 6" aria-hidden="true"><path d="M4 0v6L0 3z" fill="#8f97a8" /></svg>
          <div className="ml-2.5 h-[13px] w-[91%] rounded-full bg-[#d4d7df]" />
          <svg width="4" height="6" viewBox="0 0 4 6" className="ml-auto" aria-hidden="true"><path d="M0 0v6l4-3z" fill="#8f97a8" /></svg>
        </div>
        <span className="mr-6 ml-3 h-2.5 w-1 border-x border-[#555c6b]" />
      </div>
    </div>
  );
}

function StatusBar() {
  return (
    <footer className="flex h-[25px] items-center border-t border-[#dfe2e8] bg-[#f5f7f9] pl-[15px] text-xs whitespace-nowrap text-[#252b38]">
      <Icon name="jsMacro" />
      <span className="mx-[11px] h-4 w-px bg-[#d9dce2]" />
      <button className="flex items-center gap-0.5">
        <Icon name="payroll" />工资结算
        <Caret className="ml-2 rotate-180 text-[#6b7386]" />
      </button>
      <span className="ml-[15px]">平均值=1034.552</span>
      <span className="ml-3">计数=125</span>
      <span className="ml-3">求和=12万9319</span>
      <div className="ml-auto flex items-center pr-4">
        <Icon name="eye" />
        <button aria-label="阅读模式" className="ml-1.5 flex items-center gap-1"><Icon name="cross" /><Caret /></button>
        <span className="mx-3 h-4 w-px bg-[#d9dce2]" />
        <button aria-label="普通视图" className="flex h-6 w-[23px] items-center justify-center bg-[#dde1e7]"><Icon name="gridView" /></button>
        <button aria-label="页面布局视图" className="ml-[7px]"><Icon name="pageView" /></button>
        <button aria-label="分页预览" className="ml-[11px]"><Icon name="breakView" /></button>
        <span className="mx-3 h-4 w-px bg-[#d9dce2]" />
        <button className="flex items-center gap-[5px]">70%<Caret /></button>
        <button aria-label="缩小" className="ml-3 h-0.5 w-2.5 bg-[#2d3446]" />
        <input
          type="range"
          aria-label="缩放"
          defaultValue={32}
          className="ml-3 h-3.5 w-[140px] appearance-none bg-[linear-gradient(90deg,#4a5574_0_50px,#cfd3dc_50px)] bg-[length:100%_1px] bg-center bg-no-repeat [&::-webkit-slider-thumb]:size-3.5 [&::-webkit-slider-thumb]:appearance-none [&::-webkit-slider-thumb]:rounded-full [&::-webkit-slider-thumb]:border [&::-webkit-slider-thumb]:border-[#4a4f5a] [&::-webkit-slider-thumb]:bg-[#f0f0f0]"
        />
        <button aria-label="放大" className="ml-[7px]"><Icon name="plus" /></button>
        <button aria-label="全屏" className="ml-3"><Icon name="full" /></button>
      </div>
    </footer>
  );
}

function Watermark() {
  return (
    <div className="pointer-events-none absolute right-3 bottom-1.5 z-30 flex items-end">
      <svg width="44" height="42" viewBox="0 0 44 42" aria-hidden="true">
        <defs>
          <linearGradient id="wb" x1="0" y1="1" x2="1" y2="0"><stop offset="0" stopColor="#3f74c4" /><stop offset="1" stopColor="#5fc4f4" /></linearGradient>
          <linearGradient id="wg" x1="0" y1="1" x2="1" y2="0"><stop offset="0" stopColor="#e4ee4c" /><stop offset="1" stopColor="#3cb878" /></linearGradient>
        </defs>
        <g opacity="0.850">
          <path d="M43 1Q14-1 4 19q-5 12 2 17-1-16 11-25Q27 4 43 1z" fill="url(#wb)" />
          <path d="M34 8Q16 10 10 23q-3 9 3 10 7 0 10-7 1-5-4-4-4 2-3 6-3 0-2-5 3-9 16-11z" fill="url(#wb)" />
          <path d="M22 19q9-6 16-3 7 5-1 14-9 9-27 10 15-5 20-13 4-8-8-8z" fill="url(#wg)" />
        </g>
      </svg>
      <div className="opacity-80">
        <div className="text-[21px] leading-6 font-bold text-[#3f86d0]">极光下载站</div>
        <div className="font-['Liberation_Sans',sans-serif] text-base leading-[18px] font-bold text-[#4fbb7c]">www.xz7.com</div>
      </div>
    </div>
  );
}

export default function App() {
  return (
    <div className="relative flex h-screen overflow-hidden font-['Noto_Sans_CJK_SC',sans-serif]">
      <div className="relative z-10 flex min-w-0 flex-1 flex-col shadow-[0_0_5px_rgba(0,0,0,0.5)]">
        <TitleBar />
        <MenuBar />
        <Ribbon />
        <div className="flex min-h-0 flex-1">
          <main className="flex min-w-0 flex-1 flex-col">
            <FormulaBar />
            <div className="flex min-h-0 flex-1">
              <div className="min-w-0 flex-1 overflow-hidden"><Sheet /></div>
              <div className="flex w-[18px] flex-col items-center border-l-[3px] border-[#e4e6ec] bg-[#e9ebf0]">
                <div className="flex h-3.5 w-full flex-col items-center justify-center gap-0.5 bg-[#f5f7f9]">
                  <i className="h-px w-2.5 bg-[#7f8ba5]" /><i className="h-px w-2.5 bg-[#7f8ba5]" />
                </div>
                <Caret className="mt-2 rotate-180 text-[#8f97a8]" />
                <div className="mt-2.5 h-[173px] w-3 rounded-full bg-[#d4d7df]" />
                <Caret className="mt-auto mb-2 text-[#8f97a8]" />
              </div>
            </div>
            <SheetTabs />
          </main>
          <aside className="flex w-[45px] flex-col items-center border-l-2 border-[#e4e6ec] bg-[#f5f7f9] pt-3 text-[#2d3446]">
            <span className="h-1 w-5 border-y border-[#c9ccd2]" />
            <div className="mt-2.5 flex flex-col items-center">
              {['rocket', 'pointer', 'sliders', 'transpose', 'store', 'idea', 'book'].map((n) => (
                <button key={n} aria-label={n} className={`flex h-9 items-center ${n === 'rocket' ? 'text-[#5b6785]' : n === 'sliders' || n === 'transpose' ? 'text-[#959caf]' : ''}`}>
                  <Icon name={n} />
                </button>
              ))}
            </div>
            <span className="mt-auto h-px w-[37px] bg-[#dfe2e8]" />
            <Icon name="dots3" className="mt-[21px] mb-4" />
          </aside>
        </div>
        <StatusBar />
      </div>
      <div className="flex w-1.5 flex-col bg-[#dcdcdc]">
        <div className="h-9 bg-[#d6d6d6]" />
        <div className="h-[69px] bg-[#efefef]" />
        <div className="h-[30px] bg-[#d4d4d4]" />
        <div className="mt-[507px] h-[172px] w-1 bg-[#9b9b9b]" />
      </div>

      <MiniToolbar />
      <Menu items={CONTEXT} className="top-[403px] left-[917px] z-20 w-[254px]" />
      <Menu items={CLEAR} className="top-[643px] left-[1170px] z-20 w-[171px] pt-px" />
      <svg width="60" height="120" viewBox="0 0 60 120" className="absolute top-[530px] left-[895px] z-30 drop-shadow-[3px_2px_2px_rgba(0,0,0,0.5)]" aria-hidden="true">
        <path d="M9 11L42 92" stroke="#f00" strokeWidth="3" />
        <path d="M36 91l5 1 8-5 3 26z" fill="#f00" />
      </svg>
      <svg width="13" height="20" viewBox="0 0 13 20" className="absolute top-[659px] left-[1073px] z-30" aria-hidden="true">
        <path d="M.5.5v16l4-3.500 2.500 6 2.500-1-2.500-5.500h5z" fill="#fff" stroke="#222" />
      </svg>
      <Watermark />
    </div>
  );
}
